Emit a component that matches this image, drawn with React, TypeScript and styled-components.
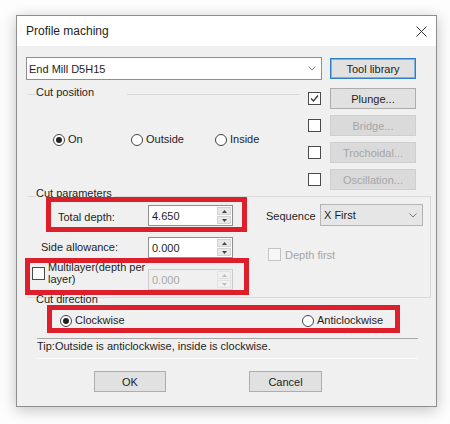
import React from "react";
import styled, { createGlobalStyle } from "styled-components";

const Global = createGlobalStyle`
  html, body { margin: 0; padding: 0; background: #ffffff; }
  body {
    font-family: "Liberation Sans", Arial, sans-serif;
    font-size: 11px;
    color: #1e1e1e;
  }
  * { box-sizing: border-box; }
`;

const Page = styled.div`
  position: relative;
  width: 450px;
  height: 424px;
  padding: 15px 0 0 16px;
  overflow: hidden;
  background: #fdfdfd;
`;

const Window = styled.div`
  width: 421px;
  height: 392px;
  border: 1px solid #8e8e8e;
  box-shadow: 0 3px 14px rgba(0, 0, 0, 0.24);
  background: #f0f0f0;
  display: flex;
  flex-direction: column;
`;

const TitleBar = styled.div`
  height: 30px;
  flex: none;
  background: #ffffff;
  display: flex;
  align-items: center;
  justify-content: space-between;
  padding: 0 9px 0 9px;
  font-size: 12px;
`;

const Body = styled.div`
  flex: 1;
  padding: 11px 20px 0 9px;
  display: flex;
  flex-direction: column;
`;

const ToolRow = styled.div`
  display: flex;
  align-items: center;
  gap: 8px;
  height: 23px;
`;

const Combo = styled.div<{ $w: number; $h: number; $flat?: boolean }>`
  width: ${(p) => p.$w}px;
  height: ${(p) => p.$h}px;
  border: 1px solid ${(p) => (p.$flat ? "#b4b4b4" : "#8f8f8f")};
  background: ${(p) => (p.$flat ? "#e6e6e6" : "#ffffff")};
  display: flex;
  align-items: center;
  justify-content: space-between;
  padding: 0 5px 0 2px;
  white-space: nowrap;
`;

const Btn = styled.button<{ $w: number; $kind?: "default" | "normal" | "disabled" }>`
  width: ${(p) => p.$w}px;
  height: 21px;
  flex: none;
  padding: 0;
  margin: 0;
  font-family: inherit;
  font-size: 11px;
  color: ${(p) => (p.$kind === "disabled" ? "#a6a6a6" : "#1e1e1e")};
  background: ${(p) => (p.$kind === "disabled" ? "#dadada" : "#e1e1e1")};
  border: 1px solid
    ${(p) =>
      p.$kind === "default" ? "#2f7fc4" : p.$kind === "disabled" ? "#cfcfcf" : "#adadad"};
  box-shadow: ${(p) => (p.$kind === "default" ? "inset 0 0 0 1px #7fb2de" : "none")};
`;

const Middle = styled.div`
  display: grid;
  grid-template-columns: 1fr 108px;
  column-gap: 8px;
  align-items: start;
`;

const Group = styled.fieldset<{ $sides: "top" | "frame" | "none" }>`
  margin: 0;
  padding: 0;
  min-width: 0;
  border: 1px solid transparent;
  border-color: ${(p) =>
    p.$sides === "frame"
      ? "#d9d9d9 #d9d9d9 #d9d9d9 transparent"
      : p.$sides === "top"
      ? "#d9d9d9 transparent transparent transparent"
      : "transparent"};
`;

const PositionGroup = styled(Group)`
  margin: 6px 0 0 1px;
`;

const ParamsGroup = styled(Group)`
  margin: -3px -15px 0 1px;
`;

const DirectionGroup = styled(Group)`
  margin: -5px 0 0 1px;
`;

const Legend = styled.legend<{ $w?: number; $pb: number }>`
  margin-left: 8px;
  padding: 0 0 ${(p) => p.$pb}px 0;
  width: ${(p) => (p.$w ? `${p.$w}px` : "auto")};
  line-height: 13px;
  float: none;
`;

const RadioRow = styled.div<{ $mt: number; $pl: number }>`
  display: flex;
  align-items: center;
  height: 13px;
  margin-top: ${(p) => p.$mt}px;
  padding-left: ${(p) => p.$pl}px;
`;

const RadioItem = styled.label<{ $w?: number }>`
  display: flex;
  align-items: center;
  gap: 3px;
  width: ${(p) => (p.$w ? `${p.$w}px` : "auto")};
  line-height: 13px;
  white-space: nowrap;
`;

const RadioCircle = styled.span<{ $on?: boolean }>`
  width: 12px;
  height: 12px;
  flex: none;
  border-radius: 50%;
  border: 1px solid #444;
  background: #fff;
  display: flex;
  align-items: center;
  justify-content: center;
  &::after {
    content: "";
    width: 6px;
    height: 6px;
    border-radius: 50%;
    background: ${(p) => (p.$on ? "#222" : "transparent")};
  }
`;

const Options = styled.div`
  padding-top: 8px;
  display: flex;
  flex-direction: column;
  gap: 6px;
`;

const OptionRow = styled.div`
  display: flex;
  align-items: center;
  gap: 9px;
`;

const Box = styled.span<{ $disabled?: boolean }>`
  width: 13px;
  height: 13px;
  flex: none;
  border: 1px solid ${(p) => (p.$disabled ? "#c4c4c4" : "#4a4a4a")};
  background: ${(p) => (p.$disabled ? "#f6f6f6" : "#fff")};
  display: flex;
  align-items: center;
  justify-content: center;
`;

const ParamsBody = styled.div`
  display: flex;
  padding-bottom: 7px;
`;

const ParamGrid = styled.div`
  display: grid;
  grid-template-columns: 120px 85px;
  grid-auto-rows: 21px;
  row-gap: 11px;
  align-items: center;
`;

const ParamLabel = styled.div<{ $indent: number; $mt?: number }>`
  padding-left: ${(p) => p.$indent}px;
  margin-top: ${(p) => p.$mt ?? 0}px;
  line-height: 13px;
  white-space: nowrap;
`;

const MultiLabel = styled.label`
  display: flex;
  align-items: center;
  gap: 3px;
  padding-left: 4px;
  align-self: start;
  margin-top: -7px;
`;

const TwoLine = styled.span`
  line-height: 11.5px;
`;

const Spin = styled.div<{ $disabled?: boolean }>`
  width: 85px;
  height: 21px;
  border: 1px solid ${(p) => (p.$disabled ? "#cccccc" : "#8f8f8f")};
  background: ${(p) => (p.$disabled ? "#f0f0f0" : "#fff")};
  color: ${(p) => (p.$disabled ? "#a8a8a8" : "#1e1e1e")};
  display: flex;
  align-items: stretch;
`;

const SpinValue = styled.span`
  flex: 1;
  padding-left: 3px;
  display: flex;
  align-items: center;
`;

const SpinArrows = styled.span`
  width: 14px;
  margin: 1px;
  display: flex;
  flex-direction: column;
  gap: 1px;
`;

const SpinArrow = styled.span<{ $disabled?: boolean }>`
  flex: 1;
  background: ${(p) => (p.$disabled ? "#f0f0f0" : "#e8e8e8")};
  border: 1px solid ${(p) => (p.$disabled ? "#e2e2e2" : "#d2d2d2")};
  display: flex;
  align-items: center;
  justify-content: center;
`;

const SideCol = styled.div`
  margin-left: 33px;
  display: flex;
  flex-direction: column;
`;

const SeqRow = styled.div`
  display: flex;
  align-items: center;
  height: 21px;
`;

const SeqLabel = styled.span`
  width: 54px;
`;

const SeqCombo = styled(Combo)`
  margin-top: -1px;
  padding-left: 3px;
`;

const DepthRow = styled.label`
  display: flex;
  align-items: center;
  gap: 4px;
  margin: 22px 0 0 2px;
  color: #a6a6a6;
`;

const Tip = styled.div`
  margin: 10px 0 0 11px;
  width: 381px;
  border-top: 1px solid #a7a7a7;
  border-bottom: 1px solid #fbfbfb;
  line-height: 14px;
  padding-bottom: 5px;
  white-space: nowrap;
`;

const ButtonRow = styled.div`
  display: flex;
  gap: 83px;
  margin-top: 12px;
  padding-left: 68px;
`;

const Mark = styled.div<{ $x: number; $y: number; $w: number; $h: number }>`
  position: absolute;
  left: ${(p) => p.$x}px;
  top: ${(p) => p.$y}px;
  width: ${(p) => p.$w}px;
  height: ${(p) => p.$h}px;
  border: 5px solid #dc1f2b;
  pointer-events: none;
`;

const Chevron = () => (
  <svg width="8" height="5" viewBox="0 0 8 5">
    <polyline points="0.5,0.5 4,4 7.5,0.5" fill="none" stroke="#7a7a7a" strokeWidth="1" />
  </svg>
);

const CloseX = () => (
  <svg width="11" height="11" viewBox="0 0 11 11">
    <line x1="0.5" y1="0.5" x2="10.5" y2="10.5" stroke="#333" strokeWidth="1" />
    <line x1="10.5" y1="0.5" x2="0.5" y2="10.5" stroke="#333" strokeWidth="1" />
  </svg>
);

const Check = () => (
  <svg width="9" height="9" viewBox="0 0 9 9">
    <polyline points="1,4.5 3.5,7 8,1.5" fill="none" stroke="#333" strokeWidth="1.2" />
  </svg>
);

const Tri = ({ up, color }: { up: boolean; color: string }) => (
  <svg width="5" height="3" viewBox="0 0 5 3">
    <polygon points={up ? "0,3 5,3 2.5,0" : "0,0 5,0 2.5,3"} fill={color} />
  </svg>
);

const SpinBox = ({ value, disabled }: { value: string; disabled?: boolean }) => {
  const c = disabled ? "#bdbdbd" : "#444";
  return (
    <Spin $disabled={disabled}>
      <SpinValue>{value}</SpinValue>
      <SpinArrows>
        <SpinArrow $disabled={disabled}>
          <Tri up color={c} />
        </SpinArrow>
        <SpinArrow $disabled={disabled}>
          <Tri up={false} color={c} />
        </SpinArrow>
      </SpinArrows>
    </Spin>
  );
};

export default function App() {
  return (
    <>
      <Global />
      <Page>
        <Window>
          <TitleBar>
            <span>Profile maching</span>
            <CloseX />
          </TitleBar>
          <Body>
            <ToolRow>
              <Combo $w={296} $h={23}>
                <span>End Mill D5H15</span>
                <Chevron />
              </Combo>
              <Btn $w={86} $kind="default">Tool library</Btn>
            </ToolRow>

            <Middle>
              <PositionGroup $sides="top">
                <Legend $w={91} $pb={3}>Cut position</Legend>
                <RadioRow $mt={31} $pl={25}>
                  <RadioItem $w={78}>
                    <RadioCircle $on />
                    On
                  </RadioItem>
                  <RadioItem $w={84}>
                    <RadioCircle />
                    Outside
                  </RadioItem>
                  <RadioItem>
                    <RadioCircle />
                    Inside
                  </RadioItem>
                </RadioRow>
              </PositionGroup>
              <Options>
                <OptionRow>
                  <Box>
                    <Check />
                  </Box>
                  <Btn $w={86} $kind="normal">Plunge...</Btn>
                </OptionRow>
                <OptionRow>
                  <Box />
                  <Btn $w={86} $kind="disabled">Bridge...</Btn>
                </OptionRow>
                <OptionRow>
                  <Box />
                  <Btn $w={86} $kind="disabled">Trochoidal...</Btn>
                </OptionRow>
                <OptionRow>
                  <Box />
                  <Btn $w={86} $kind="disabled">Oscillation...</Btn>
                </OptionRow>
              </Options>
            </Middle>

            <ParamsGroup $sides="frame">
              <Legend $w={78} $pb={5}>Cut parameters</Legend>
              <ParamsBody>
                <ParamGrid>
                  <ParamLabel $indent={30} $mt={4}>Total depth:</ParamLabel>
                  <SpinBox value="4.650" />
                  <ParamLabel $indent={13}>Side allowance:</ParamLabel>
                  <SpinBox value="0.000" />
                  <MultiLabel>
                    <Box />
                    <TwoLine>
                      Multilayer(depth per
                      <br />
                      layer)
                    </TwoLine>
                  </MultiLabel>
                  <SpinBox value="0.000" disabled />
                </ParamGrid>
                <SideCol>
                  <SeqRow>
                    <SeqLabel>Sequence</SeqLabel>
                    <SeqCombo $w={103} $h={22} $flat>
                      <span>X First</span>
                      <Chevron />
                    </SeqCombo>
                  </SeqRow>
                  <DepthRow>
                    <Box $disabled />
                    Depth first
                  </DepthRow>
                </SideCol>
              </ParamsBody>
            </ParamsGroup>

            <DirectionGroup $sides="none">
              <Legend $pb={0}>Cut direction</Legend>
              <RadioRow $mt={8} $pl={32}>
                <RadioItem $w={242}>
                  <RadioCircle $on />
                  Clockwise
                </RadioItem>
                <RadioItem>
                  <RadioCircle />
                  Anticlockwise
                </RadioItem>
              </RadioRow>
            </DirectionGroup>

            <Tip>Tip:Outside is anticlockwise, inside is clockwise.</Tip>

            <ButtonRow>
              <Btn $w={72} $kind="normal">OK</Btn>
              <Btn $w={73} $kind="normal">Cancel</Btn>
            </ButtonRow>
          </Body>
        </Window>

        <Mark $x={46} $y={197} $w={201} $h={35} />
        <Mark $x={25} $y={258} $w={224} $h={37} />
        <Mark $x={47} $y={305} $w={353} $h={28} />
      </Page>
    </>
  );
}
